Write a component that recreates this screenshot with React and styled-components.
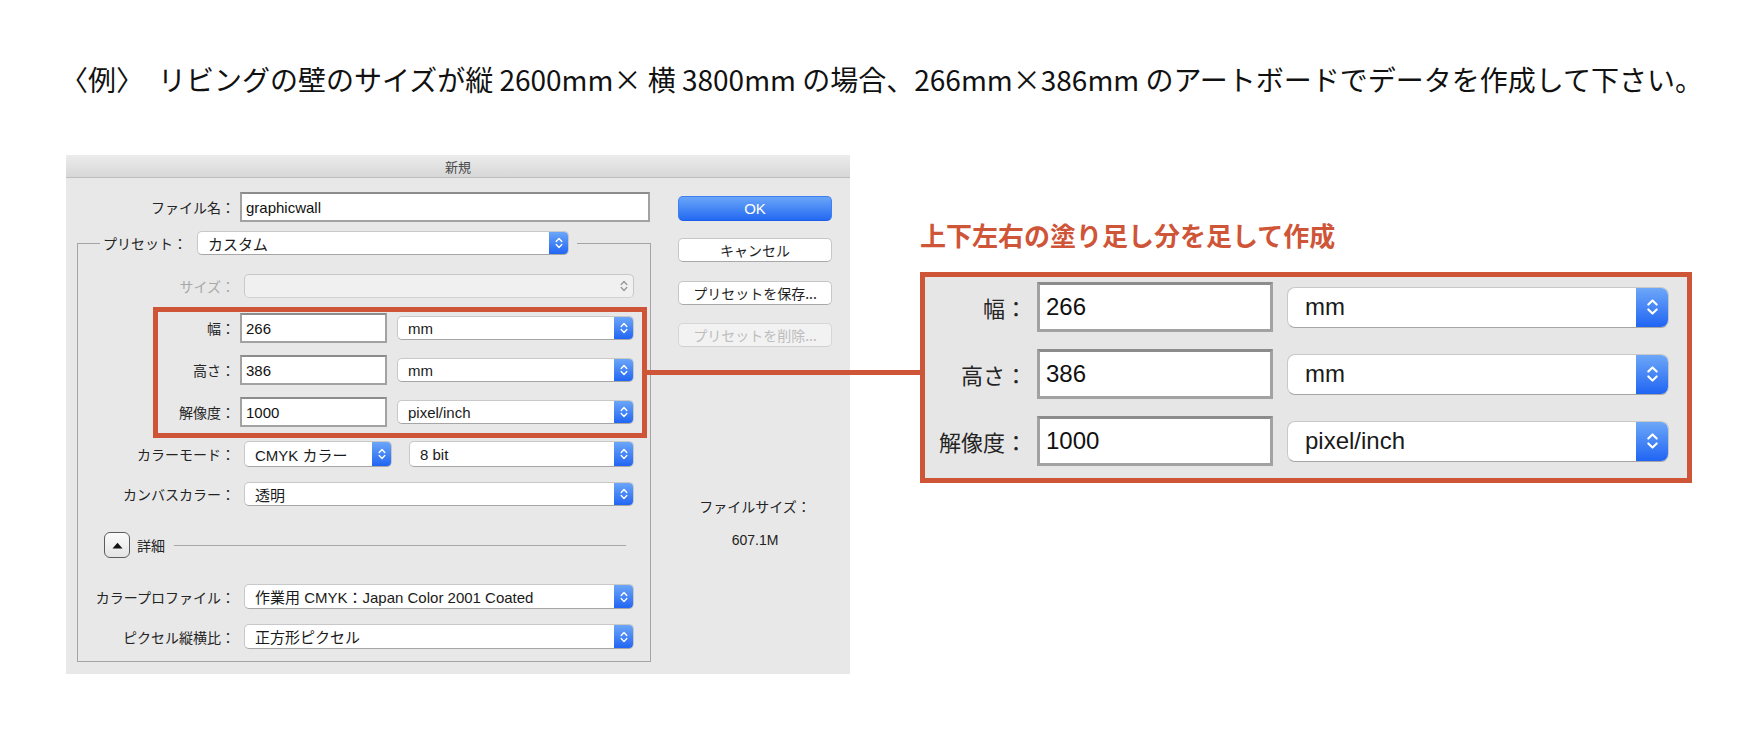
import React from 'react';
import styled, { createGlobalStyle } from 'styled-components';

const JP = `"Noto Sans CJK JP", sans-serif`;
const UI = `"Liberation Sans", "Noto Sans CJK JP", sans-serif`;
const RED = '#cf5539';

const GlobalStyle = createGlobalStyle`
  html, body {
    margin: 0;
    padding: 0;
    background: #fff;
  }
  body {
    width: 1760px;
    height: 740px;
    overflow: hidden;
    font-family: ${UI};
  }
`;

const Chevrons = ({ big, disabled }) => (
  <svg
    width={big ? 15 : 10}
    height={big ? 24 : 16}
    viewBox="0 0 10 16"
    fill="none"
    stroke={disabled ? '#9a9a9a' : '#fff'}
    strokeWidth="1.4"
    strokeLinecap="round"
    strokeLinejoin="round"
  >
    <path d="M2.2 6.4 L5 3.6 L7.8 6.4" />
    <path d="M2.2 9.6 L5 12.4 L7.8 9.6" />
  </svg>
);

const Select = ({ value, width, height, ml, big, disabled }) => (
  <SelectBox $w={width} $h={height} $ml={ml} $big={big} $disabled={disabled}>
    <SelectText $big={big}>{value}</SelectText>
    <Stepper $big={big} $disabled={disabled}>
      <Chevrons big={big} disabled={disabled} />
    </Stepper>
  </SelectBox>
);

const SizeRows = ({ big }) => {
  const rows = [
    { label: '幅：', value: '266', unit: 'mm' },
    { label: '高さ：', value: '386', unit: 'mm' },
    { label: '解像度：', value: '1000', unit: 'pixel/inch' },
  ];
  return rows.map(row => (
    <Row key={row.label}>
      <Label $w={big ? 112 : 82} $big={big}>
        {row.label}
      </Label>
      <TextField $w={big ? 236 : 147} $h={big ? 50 : 30} $big={big}>
        {row.value}
      </TextField>
      <Select
        value={row.unit}
        width={big ? 382 : 237}
        height={big ? 41 : 24}
        ml={big ? 14 : 10}
        big={big}
      />
    </Row>
  ));
};

const App = () => {
  return (
    <Page>
      <GlobalStyle />
      <Heading>
        〈例〉　リビングの壁のサイズが縦 2600mm× 横 3800mm の場合、266mm×386mm のアートボードでデータを作成して下さい。
      </Heading>

      <Content>
        <Dialog>
          <TitleBar>新規</TitleBar>
          <DialogBody>
            <FormCol>
              <Row $mt={14}>
                <Label $w={163}>ファイル名：</Label>
                <TextField $w={410} $h={30}>
                  graphicwall
                </TextField>
              </Row>

              <GroupBox>
                <Legend>
                  <Label $w={94} $pr={12}>
                    プリセット：
                  </Label>
                  <Select value="カスタム" width={372} height={24} />
                </Legend>

                <Row $mt={19}>
                  <Label $w={162} $disabled>
                    サイズ：
                  </Label>
                  <Select value="" width={390} height={24} ml={4} disabled />
                </Row>

                <AnnotBox>
                  <SizeRows />
                </AnnotBox>

                <Row $mt={3}>
                  <Label $w={162}>カラーモード：</Label>
                  <Select value="CMYK カラー" width={148} height={26} ml={4} />
                  <Select value="8 bit" width={225} height={26} ml={17} />
                </Row>

                <Row $mt={15}>
                  <Label $w={162}>カンバスカラー：</Label>
                  <Select value="透明" width={390} height={24} ml={4} />
                </Row>

                <DetailRow>
                  <Disclosure>
                    <svg width="11" height="7" viewBox="0 0 11 7">
                      <polygon points="0.5,6.5 5.5,0.8 10.5,6.5" fill="#111" />
                    </svg>
                  </Disclosure>
                  <DetailText>詳細</DetailText>
                  <Rule />
                </DetailRow>

                <Row $mt={26}>
                  <Label $w={162}>カラープロファイル：</Label>
                  <Select
                    value="作業用 CMYK：Japan Color 2001 Coated"
                    width={390}
                    height={25}
                    ml={4}
                  />
                </Row>

                <Row $mt={15}>
                  <Label $w={162}>ピクセル縦横比：</Label>
                  <Select value="正方形ピクセル" width={390} height={25} ml={4} />
                </Row>
              </GroupBox>
            </FormCol>

            <ButtonCol>
              <PushButton $primary $h={25} $mt={18}>
                OK
              </PushButton>
              <PushButton $mt={17}>キャンセル</PushButton>
              <PushButton $mt={19}>プリセットを保存...</PushButton>
              <PushButton $mt={18} $disabled>
                プリセットを削除...
              </PushButton>
              <InfoText $mt={150}>ファイルサイズ：</InfoText>
              <InfoText $mt={13}>607.1M</InfoText>
            </ButtonCol>
          </DialogBody>
        </Dialog>

        <Callout>
          <CalloutTitle>上下左右の塗り足し分を足して作成</CalloutTitle>
          <BigBox>
            <SizeRows big />
          </BigBox>
        </Callout>

        <Connector />
      </Content>
    </Page>
  );
};

const Page = styled.div`
  width: 1760px;
  height: 740px;
  background: #fff;
`;

const Heading = styled.h1`
  margin: 0;
  padding: 65px 0 0 60px;
  font-family: ${JP};
  font-weight: 400;
  font-size: 28px;
  line-height: 28px;
  color: #111;
  white-space: nowrap;
`;

const Content = styled.div`
  position: relative;
  display: flex;
  align-items: flex-start;
  margin-top: 62px;
  padding-left: 66px;
`;

const Dialog = styled.div`
  width: 784px;
  height: 519px;
  display: flex;
  flex-direction: column;
  background: #e8e8e8;
`;

const TitleBar = styled.div`
  height: 23px;
  box-sizing: border-box;
  display: flex;
  align-items: center;
  justify-content: center;
  background: linear-gradient(#ececec, #d7d7d7);
  border-bottom: 1px solid #bdbdbd;
  font-family: ${JP};
  font-size: 13px;
  color: #4a4a4a;
`;

const DialogBody = styled.div`
  display: flex;
  flex: 1;
  padding: 0 18px 0 11px;
`;

const FormCol = styled.div`
  width: 574px;
  display: flex;
  flex-direction: column;
`;

const ButtonCol = styled.div`
  width: 154px;
  margin-left: auto;
  display: flex;
  flex-direction: column;
  align-items: stretch;
`;

const Row = styled.div`
  display: flex;
  align-items: center;
  margin-top: ${p => p.$mt || 0}px;
`;

const Label = styled.div`
  width: ${p => p.$w}px;
  flex-shrink: 0;
  box-sizing: border-box;
  padding-right: ${p => (p.$pr !== undefined ? p.$pr : p.$big ? 10 : 5)}px;
  text-align: right;
  white-space: nowrap;
  font-family: ${JP};
  font-size: ${p => (p.$big ? 22 : 14)}px;
  color: ${p => (p.$disabled ? '#a8a8a8' : '#242424')};
`;

const TextField = styled.div`
  width: ${p => p.$w}px;
  height: ${p => p.$h}px;
  flex-shrink: 0;
  box-sizing: border-box;
  display: flex;
  align-items: center;
  padding-left: ${p => (p.$big ? 6 : 4)}px;
  background: #fff;
  border: ${p => (p.$big ? 3 : 2)}px solid #a2a2a2;
  border-top-color: #8c8c8c;
  font-family: ${UI};
  font-size: ${p => (p.$big ? 24 : 15)}px;
  color: #111;
`;

const SelectBox = styled.div`
  width: ${p => p.$w}px;
  height: ${p => p.$h}px;
  margin-left: ${p => p.$ml || 0}px;
  flex-shrink: 0;
  box-sizing: border-box;
  display: flex;
  overflow: hidden;
  border: 1px solid #c8c8c8;
  border-bottom-color: ${p => (p.$disabled ? '#d2d2d2' : '#a6a6a6')};
  border-radius: ${p => (p.$big ? 8 : 5)}px;
  background: ${p => (p.$disabled ? '#f0f0f0' : '#fff')};
`;

const SelectText = styled.div`
  flex: 1;
  display: flex;
  align-items: center;
  padding-left: ${p => (p.$big ? 17 : 10)}px;
  white-space: nowrap;
  overflow: hidden;
  font-family: ${UI};
  font-size: ${p => (p.$big ? 24 : 15)}px;
  color: #1a1a1a;
`;

const Stepper = styled.div`
  width: ${p => (p.$big ? 33 : 20)}px;
  flex-shrink: 0;
  display: flex;
  align-items: center;
  justify-content: center;
  margin: -1px -1px -1px 0;
  background: ${p =>
    p.$disabled ? 'transparent' : 'linear-gradient(#6fa9f8, #1e63f3)'};
`;

const GroupBox = styled.fieldset`
  width: 574px;
  box-sizing: border-box;
  margin: 9px 0 0;
  padding: 0 15px 12px 0;
  min-width: 0;
  border: 1px solid #a4a4a4;
`;

const Legend = styled.legend`
  display: flex;
  align-items: center;
  margin-left: 22px;
  padding: 0 8px 0 3px;
`;

const AnnotBox = styled.div`
  width: 494px;
  box-sizing: border-box;
  margin: 9px 0 0 75px;
  padding: 1px 8px 6px 0;
  display: flex;
  flex-direction: column;
  gap: 12px;
  border: 5px solid ${RED};
`;

const DetailRow = styled.div`
  display: flex;
  align-items: center;
  width: 556px;
  box-sizing: border-box;
  margin-top: 26px;
  padding: 0 8px 0 26px;
`;

const Disclosure = styled.div`
  width: 26px;
  height: 26px;
  box-sizing: border-box;
  display: flex;
  align-items: center;
  justify-content: center;
  border: 1.5px solid #5c5c5c;
  border-radius: 6px;
  background: linear-gradient(#fbfbfb, #e4e4e4);
`;

const DetailText = styled.span`
  margin-left: 7px;
  font-family: ${JP};
  font-size: 14px;
  color: #242424;
`;

const Rule = styled.div`
  flex: 1;
  height: 1px;
  margin-left: 9px;
  background: #a8a8a8;
`;

const PushButton = styled.div`
  height: ${p => p.$h || 24}px;
  margin-top: ${p => p.$mt || 0}px;
  box-sizing: border-box;
  display: flex;
  align-items: center;
  justify-content: center;
  border-radius: 5px;
  border: 1px solid
    ${p => (p.$primary ? '#3d7ff2' : p.$disabled ? '#d6d6d6' : '#c6c6c6')};
  border-bottom-color: ${p =>
    p.$primary ? '#1b5ee8' : p.$disabled ? '#d0d0d0' : '#a9a9a9'};
  background: ${p =>
    p.$primary
      ? 'linear-gradient(#6aa6f8, #2469f2)'
      : p.$disabled
      ? '#f2f2f2'
      : '#fff'};
  font-family: ${p => (p.$primary ? UI : JP)};
  font-size: ${p => (p.$primary ? 15 : 14)}px;
  color: ${p => (p.$primary ? '#fff' : p.$disabled ? '#bdbdbd' : '#1e1e1e')};
`;

const InfoText = styled.div`
  margin-top: ${p => p.$mt || 0}px;
  line-height: 20px;
  text-align: center;
  font-family: ${UI};
  font-size: 14px;
  color: #222;
`;

const Callout = styled.div`
  display: flex;
  flex-direction: column;
  margin-left: 70px;
  padding-top: 64px;
`;

const CalloutTitle = styled.h2`
  margin: 0;
  font-family: ${JP};
  font-weight: 700;
  font-size: 26px;
  line-height: 32px;
  color: ${RED};
  white-space: nowrap;
`;

const BigBox = styled.div`
  width: 772px;
  box-sizing: border-box;
  margin-top: 21px;
  padding: 5px 18px 12px 0;
  display: flex;
  flex-direction: column;
  gap: 17px;
  background: #e6e6e6;
  border: 5px solid ${RED};
`;

const Connector = styled.div`
  position: absolute;
  left: 647px;
  top: 215px;
  width: 273px;
  height: 5px;
  background: ${RED};
`;

export default App;
